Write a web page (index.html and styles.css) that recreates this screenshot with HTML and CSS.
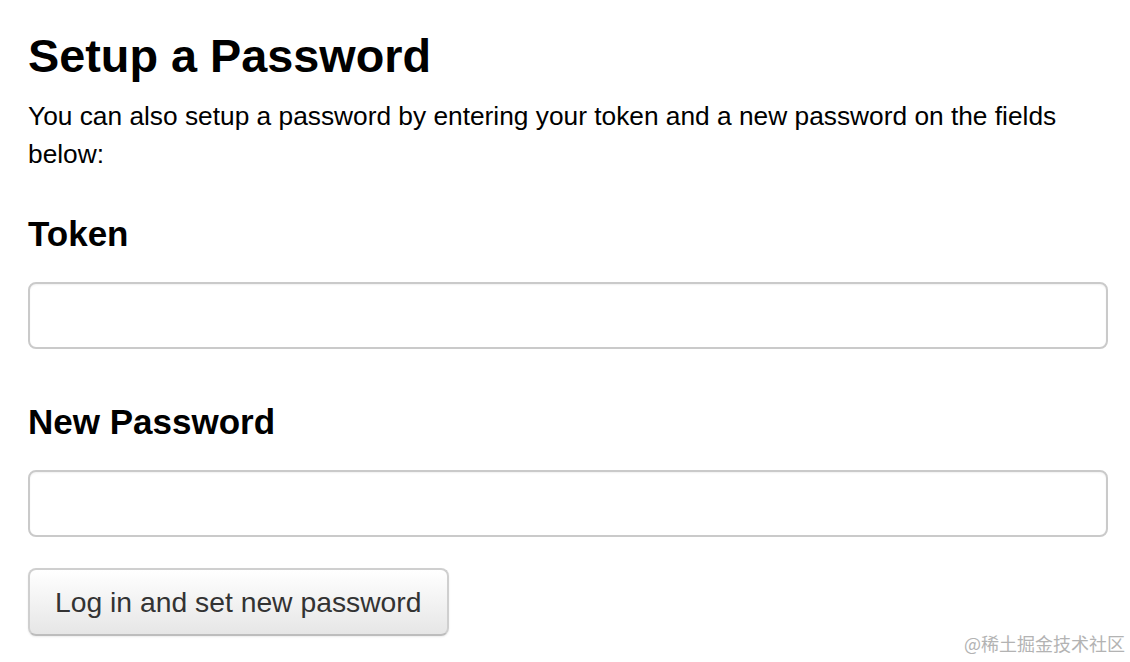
FILE: index.html
```html
<!DOCTYPE html>
<html lang="en">
<head>
<meta charset="utf-8">
<title>Setup a Password</title>
<link rel="stylesheet" href="styles.css">
</head>
<body>
<main class="page">
  <h1 class="title">Setup a Password</h1>
  <p class="intro">You can also setup a password by entering your token and a new password on the fields below:</p>
  <form class="form">
    <label class="field-label" for="token">Token</label>
    <input class="field-input" id="token" type="text">
    <label class="field-label field-label--second" for="newpw">New Password</label>
    <input class="field-input" id="newpw" type="password">
    <button class="btn" type="button">Log in and set new password</button>
  </form>
</main>
<div class="watermark">@稀土掘金技术社区</div>
</body>
</html>
```
FILE: styles.css
```css
html, body {
  margin: 0;
  padding: 0;
  background: #ffffff;
}
body {
  font-family: "Liberation Sans", Arial, Helvetica, sans-serif;
  color: #000;
  width: 1130px;
  height: 662px;
  overflow: hidden;
  position: relative;
}
.page {
  padding: 31px 22px 0 28px;
}
.title {
  margin: 0;
  font-size: 46.8px;
  line-height: 50px;
  font-weight: 700;
}
.intro {
  margin: 16px 0 0 0;
  max-width: 1064px;
  font-size: 26.3px;
  line-height: 38px;
}
.form {
  display: flex;
  flex-direction: column;
  align-items: flex-start;
}
.field-label {
  display: block;
  margin-top: 41px;
  font-size: 35px;
  line-height: 40px;
  font-weight: 700;
}
.field-label--second {
  margin-top: 53px;
}
.field-input {
  display: block;
  box-sizing: border-box;
  width: 1080px;
  height: 67px;
  margin-top: 28px;
  border: 2px solid #cacaca;
  border-radius: 8px;
  background: #fff;
  box-shadow: inset 0 1px 2px rgba(0,0,0,0.06);
  font-size: 24px;
  padding: 0 12px;
  outline: none;
}
.btn {
  box-sizing: border-box;
  margin-top: 31px;
  height: 68px;
  padding: 0 25px;
  font-family: "Liberation Sans", Arial, Helvetica, sans-serif;
  font-size: 28.3px;
  color: #333;
  background: linear-gradient(#ffffff, #e6e6e6);
  border: 2px solid #cfcfcf;
  border-bottom-color: #bdbdbd;
  border-radius: 8px;
  box-shadow: 0 1px 2px rgba(0,0,0,0.08);
  cursor: pointer;
}
.watermark {
  position: absolute;
  right: 5px;
  bottom: 8px;
  font-family: "Noto Sans CJK SC", "Liberation Sans", sans-serif;
  font-size: 18px;
  line-height: 22px;
  color: #b3b3b3;
}
```
